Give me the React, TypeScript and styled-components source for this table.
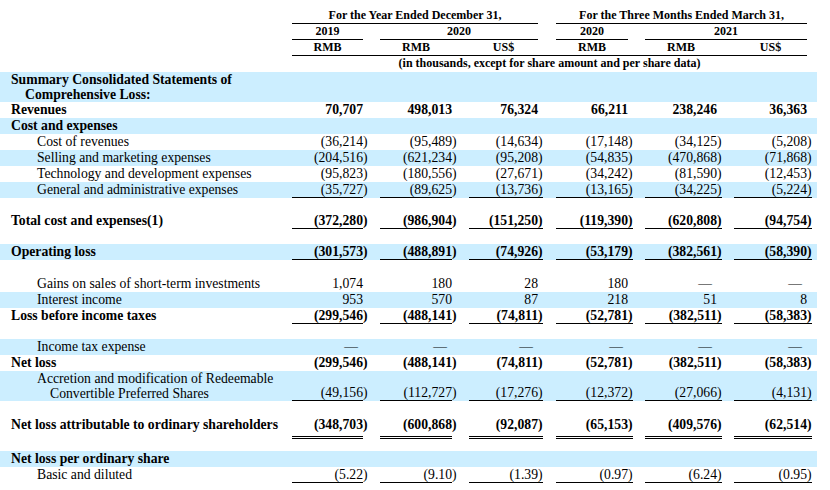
import React from "react";
import styled, { createGlobalStyle, css } from "styled-components";

const GlobalStyle = createGlobalStyle`
  html, body { margin: 0; padding: 0; background: #ffffff; }
  body {
    font-family: "Liberation Serif", "Times New Roman", serif;
    color: #000;
  }
`;

/* label | c1 | gap | c2 | gap | c3 | gap | c4 | gap | c5 | gap | c6 | pad */
const TRACKS =
  "292px 71px 17px 72px 17px 74px 13px 77px 12px 77px 12px 78px 5px";

const Page = styled.div`
  width: 817px;
  padding-top: 8px;
`;

const HeaderRow = styled.div`
  display: grid;
  grid-template-columns: ${TRACKS};
  height: 16px;
  font-size: 12px;
  font-weight: bold;
  line-height: 15px;
`;

const HeadCell = styled.div<{ $from: number; $to: number; $rule?: boolean; $trim?: boolean }>`
  grid-column: ${(p) => p.$from} / ${(p) => p.$to};
  grid-row: 1;
  text-align: center;
  white-space: nowrap;
  margin-right: ${(p) => (p.$trim ? "5px" : "0")};
  border-bottom: 1px solid ${(p) => (p.$rule ? "#000" : "transparent")};
`;

const UnitsRule = styled.div`
  grid-column: 2 / 13;
  grid-row: 1;
  align-self: end;
  margin-right: 5px;
  border-bottom: 1px solid #000;
`;

const Row = styled.div<{ $shade?: boolean }>`
  display: grid;
  grid-template-columns: ${TRACKS};
  min-height: 16px;
  font-size: 13.7px;
  line-height: 15px;
  background: ${(p) => (p.$shade ? "#cceeff" : "transparent")};
`;

const Label = styled.div<{ $bold?: boolean; $level: number }>`
  grid-column: 1;
  grid-row: 1;
  padding-left: ${(p) => (p.$level ? 37 : 11)}px;
  font-weight: ${(p) => (p.$bold ? "bold" : "normal")};
  white-space: nowrap;
`;

const LabelLine = styled.div<{ $cont?: boolean; $level: number }>`
  padding-left: ${(p) => (p.$cont ? (p.$level ? 13 : 14) : 0)}px;
`;

type Rule = "none" | "single" | "double";

const Value = styled.div<{ $col: number; $inner: boolean; $rule: Rule; $bold?: boolean }>`
  grid-column: ${(p) => p.$col};
  grid-row: 1;
  align-self: end;
  text-align: right;
  white-space: nowrap;
  font-weight: ${(p) => (p.$bold ? "bold" : "normal")};
  padding-right: ${(p) => (p.$inner ? "5px" : "0")};
  ${(p) =>
    p.$rule === "double"
      ? css`
          padding-bottom: 4px;
          border-bottom: 3px double #000;
        `
      : css`
          border-bottom: 1px solid ${p.$rule === "single" ? "#000" : "transparent"};
        `}
`;

const Paren = styled.span`
  display: inline-block;
  width: 5px;
  margin-right: -5px;
  text-align: left;
`;

const Dash = styled.span`
  margin-right: 5px;
`;

const Spacer = styled.div<{ $h: number }>`
  height: ${(p) => p.$h}px;
`;

const COLS = [
  { line: 2, inner: false },
  { line: 4, inner: false },
  { line: 6, inner: true },
  { line: 8, inner: true },
  { line: 10, inner: true },
  { line: 12, inner: true },
];

type RowSpec =
  | { spacer: number }
  | {
      label: string[];
      bold?: boolean;
      level?: number;
      shade?: boolean;
      rule?: Rule;
      values?: string[];
    };

const ROWS: RowSpec[] = [
  { label: ["Summary Consolidated Statements of", "Comprehensive Loss:"], bold: true, shade: true },
  { label: ["Revenues"], bold: true, values: ["70,707", "498,013", "76,324", "66,211", "238,246", "36,363"] },
  { label: ["Cost and expenses"], bold: true, shade: true },
  { label: ["Cost of revenues"], level: 1, values: ["(36,214)", "(95,489)", "(14,634)", "(17,148)", "(34,125)", "(5,208)"] },
  { label: ["Selling and marketing expenses"], level: 1, shade: true, values: ["(204,516)", "(621,234)", "(95,208)", "(54,835)", "(470,868)", "(71,868)"] },
  { label: ["Technology and development expenses"], level: 1, values: ["(95,823)", "(180,556)", "(27,671)", "(34,242)", "(81,590)", "(12,453)"] },
  { label: ["General and administrative expenses"], level: 1, shade: true, rule: "single", values: ["(35,727)", "(89,625)", "(13,736)", "(13,165)", "(34,225)", "(5,224)"] },
  { spacer: 15 },
  { label: ["Total cost and expenses(1)"], bold: true, rule: "single", values: ["(372,280)", "(986,904)", "(151,250)", "(119,390)", "(620,808)", "(94,754)"] },
  { spacer: 15 },
  { label: ["Operating loss"], bold: true, shade: true, rule: "single", values: ["(301,573)", "(488,891)", "(74,926)", "(53,179)", "(382,561)", "(58,390)"] },
  { spacer: 16 },
  { label: ["Gains on sales of short-term investments"], level: 1, values: ["1,074", "180", "28", "180", "—", "—"] },
  { label: ["Interest income"], level: 1, shade: true, values: ["953", "570", "87", "218", "51", "8"] },
  { label: ["Loss before income taxes"], bold: true, rule: "single", values: ["(299,546)", "(488,141)", "(74,811)", "(52,781)", "(382,511)", "(58,383)"] },
  { spacer: 15 },
  { label: ["Income tax expense"], level: 1, shade: true, values: ["—", "—", "—", "—", "—", "—"] },
  { label: ["Net loss"], bold: true, values: ["(299,546)", "(488,141)", "(74,811)", "(52,781)", "(382,511)", "(58,383)"] },
  { label: ["Accretion and modification of Redeemable", "Convertible Preferred Shares"], level: 1, shade: true, rule: "single", values: ["(49,156)", "(112,727)", "(17,276)", "(12,372)", "(27,066)", "(4,131)"] },
  { spacer: 16 },
  { label: ["Net loss attributable to ordinary shareholders"], bold: true, rule: "double", values: ["(348,703)", "(600,868)", "(92,087)", "(65,153)", "(409,576)", "(62,514)"] },
  { spacer: 12 },
  { label: ["Net loss per ordinary share"], bold: true, shade: true },
  { label: ["Basic and diluted"], level: 1, rule: "single", values: ["(5.22)", "(9.10)", "(1.39)", "(0.97)", "(6.24)", "(0.95)"] },
];

function Amount({ text }: { text: string }) {
  if (text === "—") return <Dash>—</Dash>;
  if (text.endsWith(")")) {
    return (
      <>
        {text.slice(0, -1)}
        <Paren>)</Paren>
      </>
    );
  }
  return <>{text}</>;
}

export default function App() {
  return (
    <>
      <GlobalStyle />
      <Page>
        <HeaderRow>
          <HeadCell $from={2} $to={7} $rule $trim>For the Year Ended December 31,</HeadCell>
          <HeadCell $from={8} $to={13} $rule $trim>For the Three Months Ended March 31,</HeadCell>
        </HeaderRow>
        <HeaderRow>
          <HeadCell $from={2} $to={3} $rule>2019</HeadCell>
          <HeadCell $from={4} $to={7} $rule $trim>2020</HeadCell>
          <HeadCell $from={8} $to={9} $rule $trim>2020</HeadCell>
          <HeadCell $from={10} $to={13} $rule $trim>2021</HeadCell>
        </HeaderRow>
        <HeaderRow>
          <UnitsRule />
          <HeadCell $from={2} $to={3}>RMB</HeadCell>
          <HeadCell $from={4} $to={5}>RMB</HeadCell>
          <HeadCell $from={6} $to={7} $trim>US$</HeadCell>
          <HeadCell $from={8} $to={9} $trim>RMB</HeadCell>
          <HeadCell $from={10} $to={11} $trim>RMB</HeadCell>
          <HeadCell $from={12} $to={13} $trim>US$</HeadCell>
        </HeaderRow>
        <HeaderRow>
          <HeadCell $from={2} $to={13} $trim>
            (in thousands, except for share amount and per share data)
          </HeadCell>
        </HeaderRow>
        {ROWS.map((r, i) => {
          if ("spacer" in r) return <Spacer key={i} $h={r.spacer} />;
          const level = r.level ?? 0;
          return (
            <Row key={i} $shade={r.shade}>
              <Label $bold={r.bold} $level={level}>
                {r.label.map((l, j) => (
                  <LabelLine key={j} $cont={j > 0} $level={level}>
                    {l}
                  </LabelLine>
                ))}
              </Label>
              {r.values?.map((v, k) => (
                <Value
                  key={k}
                  $col={COLS[k].line}
                  $inner={COLS[k].inner}
                  $rule={r.rule ?? "none"}
                  $bold={r.bold}
                >
                  <Amount text={v} />
                </Value>
              ))}
            </Row>
          );
        })}
      </Page>
    </>
  );
}
